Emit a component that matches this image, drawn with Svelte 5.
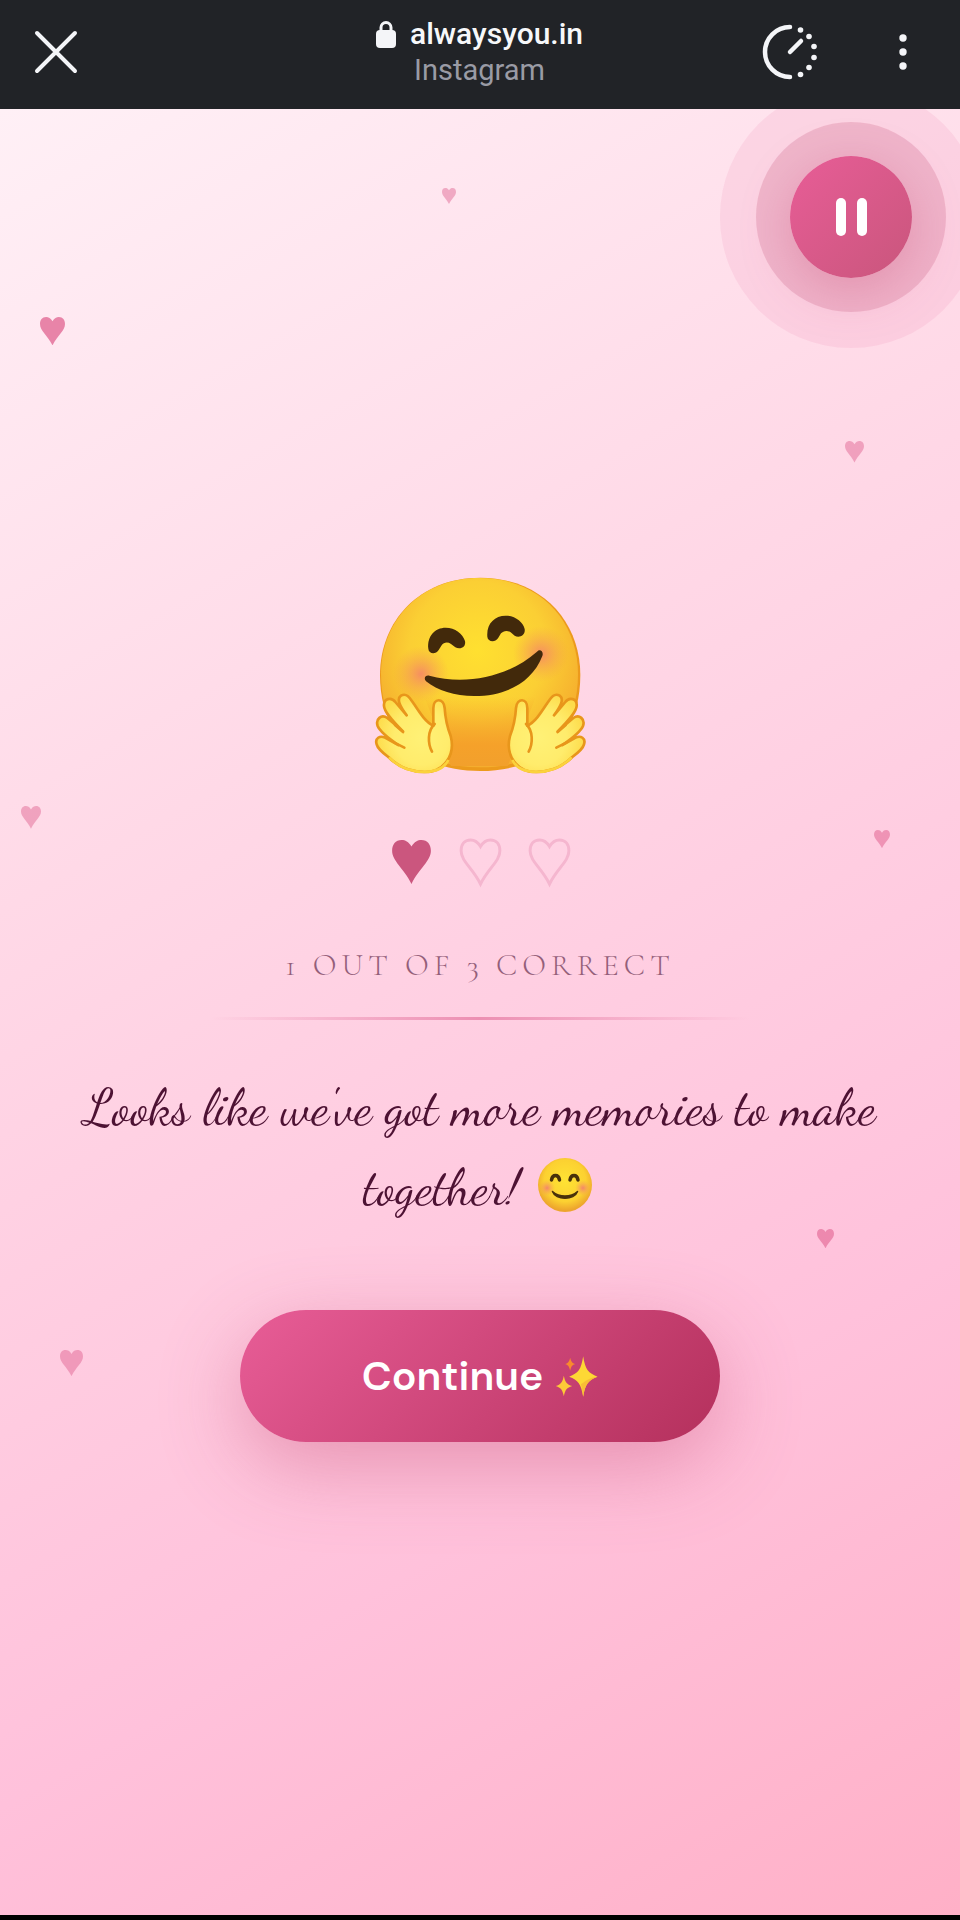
<script lang="ts">
const HEART = 'M59 20C50 5 40 0 29 0 10 0 0 14 0 33 0 65 35 85 59 134 83 85 118 65 118 33 118 14 108 0 89 0 78 0 68 5 59 20Z';

const floating = [
    { x: 46, y: 4.4, size: 14, opacity: 0.4 },
    { x: 4.2, y: 11.5, size: 25, opacity: 0.65 },
    { x: 88, y: 18.4, size: 19, opacity: 0.4 },
    { x: 2.2, y: 38.6, size: 20, opacity: 0.4 },
    { x: 91, y: 39.9, size: 16, opacity: 0.45 },
    { x: 85.1, y: 62, size: 17, opacity: 0.5 },
    { x: 6.2, y: 68.7, size: 23, opacity: 0.4 },
];

const score = 1;
const total = 3;

let playing = $state(true);
</script>

<div class="app">
    <header>
        <button class="icon" aria-label="Close">
            <svg width="48" height="48" viewBox="0 0 48 48"><path d="M5 5l38 38M43 5l-38 38" fill="none" stroke="#f4f5f8" stroke-width="4" stroke-linecap="round" /></svg>
        </button>
        <div class="title">
            <div class="url">
                <svg width="20" height="27" viewBox="0 0 20 27"><path d="M5 11V6.500a5 5 0 0 1 10 0V11" fill="none" stroke="#f4f5f8" stroke-width="3" /><rect y="9" width="20" height="18" rx="4" fill="#f4f5f8" /></svg>
                <span>alwaysyou.in</span>
            </div>
            <div class="source">Instagram</div>
        </div>
        <div class="actions">
            <button class="icon" aria-label="Speed">
                <svg width="56" height="56" viewBox="0 0 56 56">
                    <path d="M28 3a25 25 0 0 0 0 50M28 28l11-11" fill="none" stroke="#f4f5f8" stroke-width="4.500" stroke-linecap="round" />
                    <g fill="#f4f5f8">
                        <circle cx="38.500" cy="6" r="2.800" />
                        <circle cx="47" cy="12.500" r="2.800" />
                        <circle cx="52" cy="22.500" r="2.800" />
                        <circle cx="52" cy="33.500" r="2.800" />
                        <circle cx="47" cy="43.500" r="2.800" />
                        <circle cx="38.500" cy="50.500" r="2.800" />
                    </g>
                </svg>
            </button>
            <button class="icon" aria-label="More">
                <svg width="48" height="48" viewBox="0 0 48 48" fill="#f4f5f8"><circle cx="24" cy="10" r="3.700" /><circle cx="24" cy="24" r="3.700" /><circle cx="24" cy="38" r="3.700" /></svg>
            </button>
        </div>
    </header>

    <main>
        {#each floating as heart}
            <svg class="float" viewBox="0 0 118 134" width={heart.size} style="left: {heart.x}%; top: {heart.y}%; opacity: {heart.opacity}"><path d={HEART} /></svg>
        {/each}

        <button class="music" aria-label={playing ? 'Pause music' : 'Play music'} onclick={() => playing = !playing}>
            <svg width="32" height="40" viewBox="0 0 32 40" fill="#fff">
                {#if playing}
                    <rect x="1" y="1" width="10" height="38" rx="5" /><rect x="22" y="1" width="10" height="38" rx="5" />
                {:else}
                    <path d="M4 2l26 18L4 38z" />
                {/if}
            </svg>
        </button>

        <section>
            <svg class="hug" viewBox="36 48 642 594" role="img" aria-label="Hugging face">
                <defs>
                    <radialGradient id="face" gradientUnits="userSpaceOnUse" cx="350" cy="270" r="340">
                        <stop offset="0" stop-color="#ffe030" />
                        <stop offset=".6" stop-color="#fbcf34" />
                        <stop offset="1" stop-color="#f5ad2e" />
                    </radialGradient>
                    <linearGradient id="chin" x1="0" y1="0" x2="0" y2="1">
                        <stop offset="0" stop-color="#f6a52a" stop-opacity="0" />
                        <stop offset=".7" stop-color="#f5a12a" />
                        <stop offset="1" stop-color="#f2a02c" />
                    </linearGradient>
                    <radialGradient id="blush">
                        <stop offset="0" stop-color="#f5826a" stop-opacity=".85" />
                        <stop offset="1" stop-color="#f5a04a" stop-opacity="0" />
                    </radialGradient>
                    <radialGradient id="hand" cx=".6" cy=".55" r=".6">
                        <stop offset="0" stop-color="#fff176" />
                        <stop offset=".6" stop-color="#ffec6c" />
                        <stop offset="1" stop-color="#fddc4c" />
                    </radialGradient>
                </defs>
                <path d="M358 53C540 53 658 182 658 345 658 530 540 633 358 633 176 633 57 530 57 345 57 182 176 53 358 53Z" fill="#ec9a1c" />
                <path d="M356 54C535 54 651 182 651 342 651 525 535 622 356 622 178 622 60 525 60 342 60 182 178 54 356 54Z" fill="url(#face)" />
                <path d="M190 410H525L440 618H270Z" fill="url(#chin)" />
                <circle cx="180" cy="342" r="84" fill="url(#blush)" />
                <circle cx="540" cy="282" r="84" fill="url(#blush)" />
                <g fill="#42290b">
                    <path d="M202 266C198 228 222 203 254 203 282 203 306 222 312 243 316 262 297 270 283 262L270 252C260 245 248 247 242 256L233 270C223 285 203 281 202 266Z" />
                    <path d="M379 230C376 192 400 167 434 167 462 167 486 186 491 207 494 226 475 235 461 227L449 217C439 210 427 212 420 220L411 235C401 249 380 245 379 230Z" />
                    <path d="M205 347C318 378 446 348 528 275 537 265 549 275 544 288 514 366 437 408 340 408 280 408 230 392 195 364 186 354 195 344 205 347Z" />
                </g>
                {#snippet hand()}
                    <path d="M217 497V445C217 413 248 413 251 444 253 478 258 500 269 528 284 586 249 637 190 636 148 636 111 620 82 591 62 576 50 566 47 553 41 534 57 526 72 533L112 555C87 538 58 517 50 498 43 477 61 462 79 474L126 514C94 482 70 456 69 438 67 415 91 410 103 426L137 466C116 437 106 417 120 407 138 397 148 416 157 429 176 458 194 487 217 497Z" fill="url(#hand)" stroke="#e8961b" stroke-width="8" stroke-linejoin="round" />
                    <path d="M221 492C199 512 200 551 213 575M126 516L102 495M130 563L100 548" fill="none" stroke="#e8961b" stroke-width="8" stroke-linecap="round" />
                    <path d="M84 592C112 621 150 636 190 636 228 636 252 620 262 600" fill="none" stroke="#fbd23c" stroke-width="8" />
                {/snippet}
                {@render hand()}
                <g transform="matrix(-1 0 0 1 716 0)">{@render hand()}</g>
            </svg>

            <div class="hearts">
                {#each Array(total) as _, i}
                    <svg class:filled={i < score} viewBox="-3 -3 124 140"><path d={HEART} /></svg>
                {/each}
            </div>

            <p class="score">{score} out of {total} correct</p>
            <hr />

            <p class="message">
                Looks like we've got more memories to make together!
                <svg class="smile" viewBox="0 0 56 56" role="img" aria-label="Smiling face">
                    <defs>
                        <radialGradient id="smile" cx=".5" cy=".42" r=".55">
                            <stop offset="0" stop-color="#ffe334" />
                            <stop offset=".7" stop-color="#fcd131" />
                            <stop offset="1" stop-color="#eda52d" />
                        </radialGradient>
                        <radialGradient id="cheek"><stop offset="0" stop-color="#f4866b" /><stop offset="1" stop-color="#f7a94e" stop-opacity="0" /></radialGradient>
                    </defs>
                    <circle cx="28" cy="28" r="27" fill="url(#smile)" />
                    <circle cx="10" cy="31" r="8" fill="url(#cheek)" />
                    <circle cx="46" cy="31" r="8" fill="url(#cheek)" />
                    <path d="M14.500 23c1-6 7-6 8 0M33 23c1-6 7-6 8 0" fill="none" stroke="#49310b" stroke-width="3.500" stroke-linecap="round" />
                    <path d="M15.500 34.500c7 6 18 6 25 0-3 9-22 9-25 0Z" fill="#49310b" stroke="#49310b" stroke-width="1.500" stroke-linejoin="round" />
                </svg>
            </p>

            <button class="continue">
                Continue
                <svg width="43" height="41" viewBox="996 195 128 123" aria-hidden="true">
                    <path d="M1080 196C1086 236 1096 247 1123 257 1096 267 1086 279 1080 317 1074 279 1065 267 1038 257 1065 247 1074 236 1080 196Z" fill="#fdd835" />
                    <path d="M1123 257C1096 267 1086 279 1080 317 1078 300 1076 288 1073 280 1085 272 1095 260 1123 257Z" fill="#f9bd36" />
                    <path d="M1022 254C1026 274 1031 280 1047 285 1031 290 1026 296 1022 316 1018 296 1013 290 998 285 1013 280 1018 274 1022 254Z" fill="#fdca38" />
                    <path d="M1041 200C1044 212 1047 216 1056 219 1047 222 1044 226 1041 239 1038 226 1035 222 1026 219 1035 216 1038 212 1041 200Z" fill="#f98a2c" />
                </svg>
            </button>
        </section>
    </main>
</div>

<style>
:global(body) {
    margin: 0;
    background: #000;
}
.app {
    min-height: 100vh;
    box-sizing: border-box;
    border-bottom: 5px solid #000;
    display: flex;
    flex-direction: column;
    font-family: "DM Sans", Inter, "Liberation Sans", sans-serif;
}
button {
    border: none;
    padding: 0;
    cursor: pointer;
    font-family: inherit;
}
svg {
    display: block;
}
p {
    margin: 0;
}
header {
    height: 109px;
    box-sizing: border-box;
    padding: 0 33px 5px 32px;
    background: #212327;
    display: grid;
    grid-template-columns: 1fr auto 1fr;
    align-items: center;
    font-family: Roboto, "Liberation Sans", sans-serif;
}
.icon {
    background: none;
    justify-self: start;
}
.title {
    display: flex;
    flex-direction: column;
    align-items: center;
    font-size: 29px;
    line-height: 36px;
}
.url {
    display: flex;
    align-items: center;
    gap: 14px;
    color: #f7f8fa;
    font-size: 30px;
    font-weight: 500;
}
.source {
    color: #9a9ba5;
}
.actions {
    display: flex;
    align-items: center;
    justify-content: flex-end;
    gap: 61px;
}
main {
    flex: 1;
    position: relative;
    overflow: hidden;
    display: flex;
    align-items: center;
    justify-content: center;
    background: linear-gradient(150deg, #fff0f6 0%, #ffd9e7 34%, #ffc1db 72%, #ffb0c7 100%);
}
.float {
    position: absolute;
    fill: #dc4f82;
}
.music {
    position: absolute;
    top: 47px;
    right: 48px;
    width: 122px;
    height: 122px;
    border-radius: 50%;
    display: grid;
    place-content: center;
    background: linear-gradient(135deg, #e85d97, #c9567c);
    box-shadow: 0 12px 48px rgba(201, 86, 124, .35), 0 0 0 34px rgba(201, 86, 124, .24), 0 0 0 70px rgba(225, 93, 151, .1);
}
section {
    width: 100%;
    box-sizing: border-box;
    padding: 0 72px 6px;
    display: flex;
    flex-direction: column;
    align-items: center;
    text-align: center;
}
.hug {
    width: 214px;
    height: 198px;
}
.hearts {
    display: flex;
    gap: 28px;
    margin-top: 65px;
}
.hearts svg {
    width: 41px;
    height: 46px;
    fill: none;
    stroke: #f5b6cf;
    stroke-width: 9;
    overflow: visible;
}
.hearts .filled {
    fill: #cb567e;
    stroke: none;
}
.score {
    margin-top: 60px;
    font: 300 31px/40px "Cormorant Garamond", "Liberation Serif", serif;
    letter-spacing: 5px;
    text-transform: uppercase;
    color: #945f7a;
}
hr {
    width: 540px;
    max-width: 100%;
    height: 3px;
    margin: 32px 0 48px;
    border: none;
    background: linear-gradient(90deg, transparent, #ec8fb2, transparent);
}
.message {
    font: 51px/80px "Dancing Script", "Liberation Serif", serif;
    color: #4d1233;
}
.smile {
    display: inline-block;
    width: 56px;
    height: 56px;
    margin: 0 4px;
    vertical-align: -9px;
}
.continue {
    width: 480px;
    max-width: 100%;
    height: 132px;
    margin-top: 82px;
    border-radius: 66px;
    display: flex;
    align-items: center;
    justify-content: center;
    gap: 12px;
    color: #fff;
    font-size: 41px;
    font-weight: 600;
    background: linear-gradient(135deg, #e85d97, #b4305c);
    box-shadow: 0 24px 80px rgba(201, 86, 124, .45);
}
</style>
